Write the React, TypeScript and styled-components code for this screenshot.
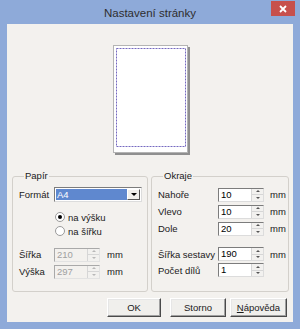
import React from 'react'
import styled, {createGlobalStyle} from 'styled-components'

const GlobalStyle = createGlobalStyle`
  html, body {
    margin: 0;
    padding: 0;
    background: #8eaad9;
  }
  body {
    font-family: "Liberation Sans", Arial, sans-serif;
    font-size: 9.5px;
    color: #1a1a1a;
  }
`

const Window = styled.div`
  width: 300px;
  height: 329px;
  box-sizing: border-box;
  background: #8eaad9;
  padding: 0 7px 7px;
  display: flex;
  flex-direction: column;
`

const TitleBar = styled.div`
  height: 24px;
  flex: none;
  display: grid;
  grid-template-columns: 1fr auto 1fr;
  align-items: start;
`

const Title = styled.div`
  grid-column: 2;
  line-height: 24px;
  padding-top: 1px;
  font-size: 11.5px;
  color: #2e2e2e;
`

const CloseButton = styled.div`
  grid-column: 3;
  justify-self: end;
  margin: 1px -2px 0 0;
  width: 24px;
  height: 15px;
  background: #c7504c;
  display: flex;
  align-items: center;
  justify-content: center;
`

const Client = styled.div`
  flex: 1;
  background: #f3f1ee;
  padding: 21px 4px 5px 5px;
  display: flex;
  flex-direction: column;
`

const Preview = styled.div`
  align-self: center;
  margin-left: 2px;
  display: flex;
`

const Groups = styled.div`
  flex: 1;
  margin-top: 15px;
  display: grid;
  grid-template-columns: 136px 138px;
  column-gap: 3px;
`

const Group = styled.fieldset`
  margin: 0;
  padding: 4px 6px 0;
  min-width: 0;
  border: 1px solid #d3d0cb;
  border-radius: 3px;
`

const Legend = styled.legend`
  margin-left: 5px;
  padding: 0 1px;
  line-height: 12px;
`

const Row = styled.div<{$label: number; $h?: number; $top?: number}>`
  display: grid;
  grid-template-columns: ${p => p.$label}px auto auto;
  justify-content: start;
  align-items: center;
  height: ${p => p.$h ?? 17}px;
  margin-top: ${p => p.$top ?? 0}px;
`

const Unit = styled.span<{$gap: number}>`
  margin-left: ${p => p.$gap}px;
`

const Combo = styled.div`
  width: 88px;
  height: 15px;
  box-sizing: border-box;
  border: 1px solid;
  border-color: #7c7c7c #dcdcdc #dcdcdc #7c7c7c;
  background: #fff;
  display: flex;
  padding: 1px;
`

const ComboValue = styled.div`
  flex: 1;
  background: #5f88cf;
  color: #fff;
  line-height: 11px;
  padding-left: 1px;
`

const DropButton = styled.div`
  width: 13px;
  box-sizing: border-box;
  background: #f0efec;
  border: 1px solid;
  border-color: #fff #555 #555 #fff;
  display: flex;
  align-items: center;
  justify-content: center;

  &::after {
    content: '';
    border-left: 3px solid transparent;
    border-right: 3px solid transparent;
    border-top: 3px solid #000;
  }
`

const RadioRow = styled.div<{$top?: number}>`
  display: flex;
  align-items: center;
  height: 14px;
  margin: ${p => p.$top ?? 0}px 0 0 36px;
`

const Radio = styled.span<{$checked?: boolean}>`
  width: 10px;
  height: 10px;
  box-sizing: border-box;
  border-radius: 50%;
  border: 1px solid #9a9a9a;
  background: #fff;
  margin-right: 3px;
  display: flex;
  align-items: center;
  justify-content: center;

  &::after {
    content: '';
    width: 4px;
    height: 4px;
    border-radius: 50%;
    background: ${p => (p.$checked ? '#000' : 'transparent')};
  }
`

const Spin = styled.div<{$disabled?: boolean}>`
  width: 46px;
  height: 14px;
  box-sizing: border-box;
  border: 1px solid;
  border-color: ${p => (p.$disabled ? '#a9a9a9 #e2e2e2 #e2e2e2 #a9a9a9' : '#7c7c7c #dcdcdc #dcdcdc #7c7c7c')};
  background: ${p => (p.$disabled ? '#f3f1ee' : '#fff')};
  color: ${p => (p.$disabled ? '#a0a0a0' : '#000')};
  display: flex;
`

const SpinText = styled.div`
  flex: 1;
  line-height: 12px;
  padding-left: 2px;
`

const SpinButtons = styled.div`
  width: 11px;
  display: flex;
  flex-direction: column;
  border-left: 1px solid #d6d6d6;
`

const SpinButton = styled.div<{$down?: boolean; $disabled?: boolean}>`
  flex: 1;
  background: #f2f1ef;
  display: flex;
  align-items: center;
  justify-content: center;
  border-top: ${p => (p.$down ? '1px solid #d6d6d6' : 'none')};

  &::after {
    content: '';
    border-left: 2px solid transparent;
    border-right: 2px solid transparent;
    ${p => (p.$down ? 'border-top' : 'border-bottom')}: 2px solid ${p => (p.$disabled ? '#b8b8b8' : '#555')};
  }
`

const ButtonRow = styled.div`
  flex: none;
  margin-top: 6px;
  display: flex;
  justify-content: flex-end;
  padding-right: 2px;
`

const Button = styled.button<{$w: number; $gap: number}>`
  width: ${p => p.$w}px;
  height: 19px;
  margin-left: ${p => p.$gap}px;
  padding: 0;
  font: inherit;
  color: #1a1a1a;
  background: #f0efec;
  border: 1px solid;
  border-color: #fff #4a4a4a #4a4a4a #fff;
  box-shadow: inset -1px -1px 0 #a0a0a0, inset 1px 1px 0 #e6e6e6;
`

const PagePreview = () => (
  <svg width="77" height="110" viewBox="0 0 77 110">
    <rect x="2" y="2" width="75" height="108" fill="#8f8f8f" />
    <rect x="0.5" y="0.5" width="74" height="107" fill="#fff" stroke="#b4b4b4" />
    <rect
      x="3.5"
      y="3.5"
      width="69"
      height="98"
      fill="none"
      stroke="#7569c0"
      strokeDasharray="2 1"
    />
  </svg>
)

const SpinEdit = ({value, disabled}: {value: string; disabled?: boolean}) => (
  <Spin $disabled={disabled}>
    <SpinText>{value}</SpinText>
    <SpinButtons>
      <SpinButton $disabled={disabled} />
      <SpinButton $down $disabled={disabled} />
    </SpinButtons>
  </Spin>
)

export default function App() {
  return (
    <Window>
      <GlobalStyle />
      <TitleBar>
        <Title>Nastavení stránky</Title>
        <CloseButton>
          <svg width="8" height="8" viewBox="0 0 8 8">
            <path d="M1 1L7 7M7 1L1 7" stroke="#fff" strokeWidth="1.8" />
          </svg>
        </CloseButton>
      </TitleBar>
      <Client>
        <Preview>
          <PagePreview />
        </Preview>
        <Groups>
          <Group>
            <Legend>Papír</Legend>
            <Row $label={35}>
              <span>Formát</span>
              <Combo>
                <ComboValue>A4</ComboValue>
                <DropButton />
              </Combo>
            </Row>
            <RadioRow $top={7}>
              <Radio $checked />
              na výšku
            </RadioRow>
            <RadioRow>
              <Radio />
              na šířku
            </RadioRow>
            <Row $label={35} $top={8}>
              <span>Šířka</span>
              <SpinEdit value="210" disabled />
              <Unit $gap={7}>mm</Unit>
            </Row>
            <Row $label={35}>
              <span>Výška</span>
              <SpinEdit value="297" disabled />
              <Unit $gap={7}>mm</Unit>
            </Row>
          </Group>
          <Group>
            <Legend>Okraje</Legend>
            <Row $label={60}>
              <span>Nahoře</span>
              <SpinEdit value="10" />
              <Unit $gap={6}>mm</Unit>
            </Row>
            <Row $label={60}>
              <span>Vlevo</span>
              <SpinEdit value="10" />
              <Unit $gap={6}>mm</Unit>
            </Row>
            <Row $label={60}>
              <span>Dole</span>
              <SpinEdit value="20" />
              <Unit $gap={6}>mm</Unit>
            </Row>
            <Row $label={60} $top={9} $h={16}>
              <span>Šířka sestavy</span>
              <SpinEdit value="190" />
              <Unit $gap={6}>mm</Unit>
            </Row>
            <Row $label={60} $h={16}>
              <span>Počet dílů</span>
              <SpinEdit value="1" />
            </Row>
          </Group>
        </Groups>
        <ButtonRow>
          <Button $w={54} $gap={0}>OK</Button>
          <Button $w={56} $gap={9}>Storno</Button>
          <Button $w={57} $gap={4}>
            <u>N</u>ápověda
          </Button>
        </ButtonRow>
      </Client>
    </Window>
  )
}
